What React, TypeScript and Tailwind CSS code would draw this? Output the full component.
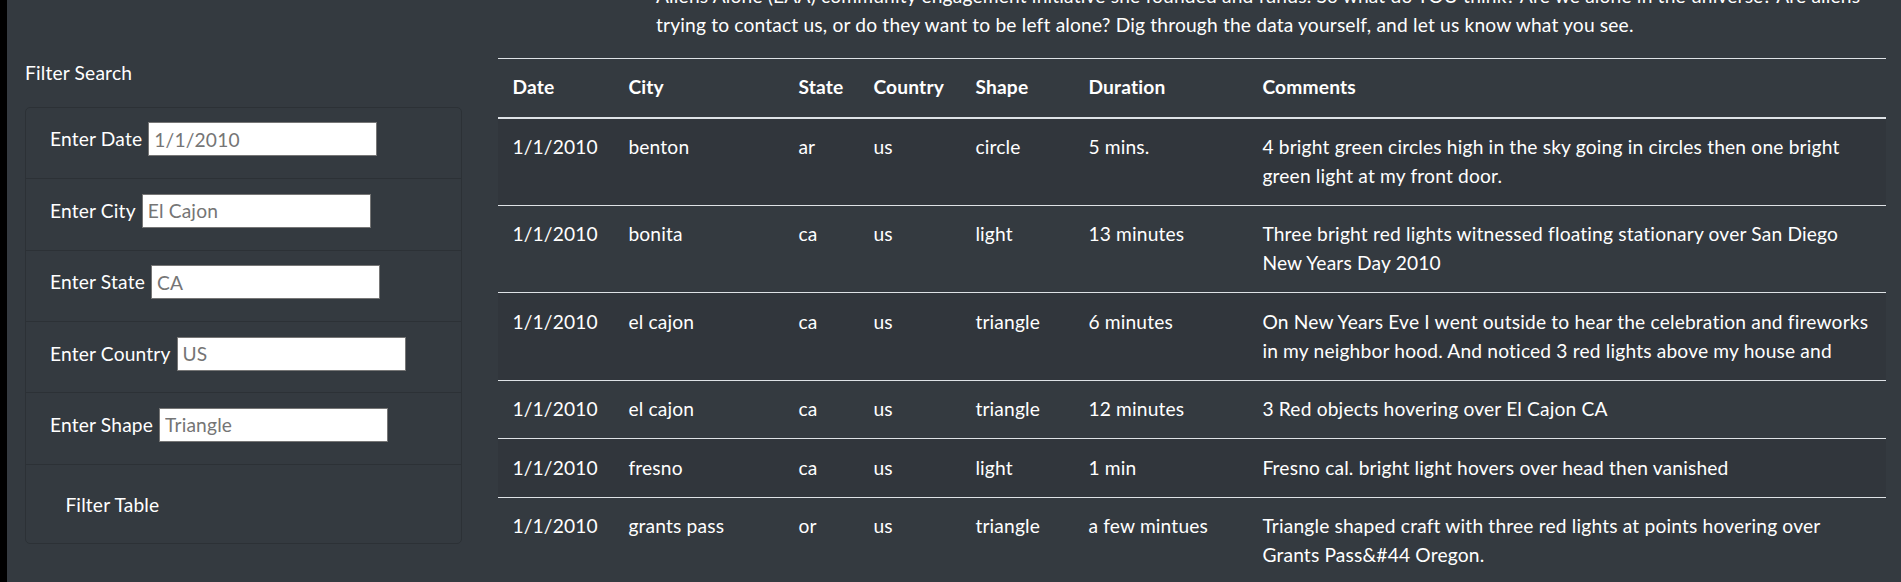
import React from 'react';

interface Sighting {
  datetime: string;
  city: string;
  state: string;
  country: string;
  shape: string;
  duration: string;
  comments: string[];
}

// Comment lines are split where the original table wraps them
const sightings: Sighting[] = [
  {
    datetime: '1/1/2010',
    city: 'benton',
    state: 'ar',
    country: 'us',
    shape: 'circle',
    duration: '5 mins.',
    comments: ['4 bright green circles high in the sky going in circles then one bright', 'green light at my front door.'],
  },
  {
    datetime: '1/1/2010',
    city: 'bonita',
    state: 'ca',
    country: 'us',
    shape: 'light',
    duration: '13 minutes',
    comments: ['Three bright red lights witnessed floating stationary over San Diego', 'New Years Day 2010'],
  },
  {
    datetime: '1/1/2010',
    city: 'el cajon',
    state: 'ca',
    country: 'us',
    shape: 'triangle',
    duration: '6 minutes',
    comments: ['On New Years Eve I went outside to hear the celebration and fireworks', 'in my neighbor hood. And noticed 3 red lights above my house and'],
  },
  {
    datetime: '1/1/2010',
    city: 'el cajon',
    state: 'ca',
    country: 'us',
    shape: 'triangle',
    duration: '12 minutes',
    comments: ['3 Red objects hovering over El Cajon CA'],
  },
  {
    datetime: '1/1/2010',
    city: 'fresno',
    state: 'ca',
    country: 'us',
    shape: 'light',
    duration: '1 min',
    comments: ['Fresno cal. bright light hovers over head then vanished'],
  },
  {
    datetime: '1/1/2010',
    city: 'grants pass',
    state: 'or',
    country: 'us',
    shape: 'triangle',
    duration: 'a few mintues',
    comments: ['Triangle shaped craft with three red lights at points hovering over', 'Grants Pass&#44 Oregon.'],
  },
];

const filters = [
  { id: 'datetime', label: 'Enter Date', placeholder: '1/1/2010' },
  { id: 'city', label: 'Enter City', placeholder: 'El Cajon' },
  { id: 'state', label: 'Enter State', placeholder: 'CA' },
  { id: 'country', label: 'Enter Country', placeholder: 'US' },
  { id: 'shape', label: 'Enter Shape', placeholder: 'Triangle' },
];

const headers = ['Date', 'City', 'State', 'Country', 'Shape', 'Duration', 'Comments'];
const colWidths = ['w-[116px]', 'w-[170px]', 'w-[75px]', 'w-[102px]', 'w-[113px]', 'w-[174px]', 'w-[638px]'];

export default function App() {
  return (
    <div
      className="flex h-[582px] w-[1901px] overflow-hidden bg-[#343a40] text-white text-[19.2px] leading-[28.8px] tracking-[0.17px]"
      style={{ fontFamily: 'Lato, "Open Sans", sans-serif' }}
    >
      {/* Left edge strip */}
      <div className="w-[7px] shrink-0 bg-black" />

      {/* Filter sidebar */}
      <aside className="w-[473px] shrink-0 pl-[18px] pr-[18px] pt-[58.6px]">
        <h5 className="mb-[19.6px]">Filter Search</h5>
        <div className="w-[437px] rounded-[5px] border border-[#2c3136]">
          <ul className="divide-y divide-[#2c3136]">
            {filters.map((f) => (
              <li key={f.id} className="px-[24px] py-[14.4px]">
                <div className="flex h-[41.6px] items-start">
                  <label htmlFor={f.id} className="leading-[34px]">
                    {f.label}
                  </label>
                  <input
                    id={f.id}
                    type="text"
                    placeholder={f.placeholder}
                    className="ml-[6px] h-[34px] w-[229px] border border-[#767676] bg-white pl-[5px] text-[19.2px] text-black placeholder:text-[#757575] outline-none"
                  />
                </div>
              </li>
            ))}
            <li className="px-[24px] pt-[18px] pb-[15px]">
              <button
                type="button"
                className="rounded-[5px] border border-transparent px-[14.4px] py-[7.2px] leading-[28.8px] text-white"
              >
                Filter Table
              </button>
            </li>
          </ul>
        </div>
      </aside>

      {/* Main content */}
      <main className="w-[1406px] shrink-0 pl-[18px]">
        <p className="-mt-[18.2px] mb-[18.6px] pl-[158px]">
          Aliens Alone (EAA) community engagement initiative she founded and funds. So what do YOU think? Are we alone in the universe? Are aliens
          <br />
          trying to contact us, or do they want to be left alone? Dig through the data yourself, and let us know what you see.
        </p>

        <table className="w-[1388px] table-fixed border-collapse">
          <colgroup>
            {colWidths.map((w, i) => (
              <col key={i} className={w} />
            ))}
          </colgroup>
          <thead>
            <tr className="border-t border-[#dee2e6]">
              {headers.map((h) => (
                <th
                  key={h}
                  className="border-b-2 border-[#dee2e6] px-[14.4px] py-[14.4px] text-left align-bottom font-bold"
                >
                  {h}
                </th>
              ))}
            </tr>
          </thead>
          <tbody>
            {sightings.map((s, i) => (
              <tr key={i} className={`border-t border-[#dee2e6] ${i % 2 === 0 ? 'bg-[#31363c]' : ''}`}>
                <td className="px-[14.4px] py-[14.4px] align-top">{s.datetime}</td>
                <td className="px-[14.4px] py-[14.4px] align-top">{s.city}</td>
                <td className="px-[14.4px] py-[14.4px] align-top">{s.state}</td>
                <td className="px-[14.4px] py-[14.4px] align-top">{s.country}</td>
                <td className="px-[14.4px] py-[14.4px] align-top">{s.shape}</td>
                <td className="px-[14.4px] py-[14.4px] align-top">{s.duration}</td>
                <td className="px-[14.4px] py-[14.4px] align-top">
                  {s.comments.map((line, j) => (
                    <span key={j} className="block whitespace-nowrap">
                      {line}
                    </span>
                  ))}
                </td>
              </tr>
            ))}
          </tbody>
        </table>
      </main>
    </div>
  );
}
